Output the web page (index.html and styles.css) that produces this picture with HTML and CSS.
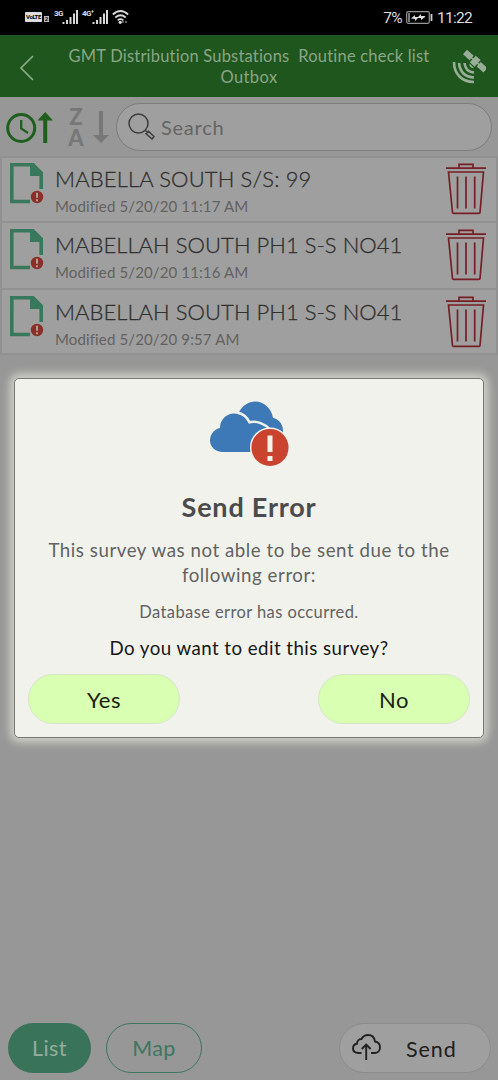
FILE: index.html
```
<!DOCTYPE html>
<html lang="en">
<head>
<meta charset="utf-8">
<title>Outbox</title>
<link rel="stylesheet" href="styles.css">
</head>
<body>
<svg class="defs" width="0" height="0">
  <symbol id="file" viewBox="0 0 36 42">
    <path d="M20 38.5H1.8V1.8H23L31.2 10V26" fill="none" stroke="#38785c" stroke-width="3.6"/>
    <path d="M20 1h4l9 9v3H20z" fill="#38785c"/>
    <circle cx="27" cy="34" r="6.2" fill="#8a3028"/>
    <path d="M27 29.8v5M27 36.3v2" stroke="#b4aaa2" stroke-width="1.8"/>
  </symbol>
  <symbol id="trash" viewBox="0 0 40 52">
    <g fill="none" stroke="#761f25" stroke-width="1.7">
      <path d="M0 5.2H40M13 4.5V1.3H27V4.5M2.5 9H37.5L34 49.5Q33.9 50.4 33 50.4H7.500Q6.600 50.400 6.500 49.500ZM11.500 13.500V45.500M20 13.500V45.500M28.700 13.500V45.500"/>
    </g>
  </symbol>
  <symbol id="signal" viewBox="0 0 16 14">
    <path d="M1.500 14V12M5 14V10M8.500 14V7M12 14V3.500M15 14V0" stroke="#d8d8d8" stroke-width="2"/>
  </symbol>
</svg>
<div class="screen">
  <header class="status">
    <div class="status-left">
      <span class="volte">VoLTE</span><span class="sim">2</span>
      <span class="net">3G</span><svg class="bars" width="16" height="14"><use href="#signal"/></svg>
      <span class="net net-b">4G⁺</span><svg class="bars" width="16" height="14"><use href="#signal"/></svg>
      <svg class="wifi" width="17" height="14" viewBox="0 0 17 14"><g fill="none" stroke="#d8d8d8" stroke-width="1.700"><path d="M.8 4.500Q8.500-2.500 16.200 4.500M3.300 7.500Q8.500 3 13.700 7.500M5.700 10.300Q8.500 8 11.300 10.300"/></g><circle cx="8.200" cy="12.300" r="1.600" fill="#ddd"/><path d="M11 13V11M14 13V11" stroke="#999" stroke-width="1.200"/></svg>
    </div>
    <div class="status-right">
      <span>7%</span>
      <svg width="27" height="13" viewBox="0 0 27 13"><rect x=".7" y=".7" width="22.600" height="11.600" rx="1.500" fill="none" stroke="#999" stroke-width="1.200"/><path d="M3 2v9" stroke="#777" stroke-width="2"/><path d="M5 7.500L9 4V6H12L15 3V5H19V6L15 9V7H12L9 10V8Z" fill="#ddd"/><path d="M25.500 3v7" stroke="#ccc" stroke-width="1.800"/></svg>
      <span>11:22</span>
    </div>
  </header>
  <div class="appbar">
    <svg class="back" width="16" height="26" viewBox="0 0 16 26"><path d="M14 1L2 13L14 25" fill="none" stroke="#8fa98c" stroke-width="1.700"/></svg>
    <h1 class="title"><span class="t1">GMT Distribution Substations&nbsp; Routine check list</span><br><span class="t2">Outbox</span></h1>
    <svg class="sat" width="34" height="34" viewBox="0 0 34 34"><g fill="none" stroke="#99ae96" stroke-width="2.600"><path d="M2 12C2 24 10 32 22 32M7 13C8 22 13 27 22 27.500M12.500 13C13 19 16 22 22 22.500"/></g><g fill="#99ae96"><path d="M17.500 13.500C17 16 19 18.500 22 18Z"/><g transform="translate(23 11) rotate(42)"><rect x="-13.500" y="-3" width="9" height="6"/><rect x="-3" y="-4.500" width="6.500" height="9"/><rect x="5" y="-3" width="9" height="6"/><path d="M-5-.8H6v1.500H-5z"/></g></g></svg>
  </div>
  <div class="toolbar">
    <svg class="sort-time" width="47" height="32" viewBox="0 0 47 32"><g fill="none" stroke="#205e1e"><circle cx="15.200" cy="16" r="13.500" stroke-width="3"/><path d="M15.200 8V16.500L22 21" stroke-width="2.300"/><path d="M39.200 31V4" stroke-width="4"/></g><path d="M31.500 8.500L39.200 0L47 8.500Z" fill="#205e1e"/></svg>
    <div class="sort-name"><span class="za">Z<br>A</span><svg width="16" height="33" viewBox="0 0 16 33"><path d="M8 1V27" stroke="#777" stroke-width="4"/><path d="M0 25H16L8 33Z" fill="#777"/></svg></div>
    <div class="search">
      <svg width="27" height="27" viewBox="0 0 27 27"><g fill="none" stroke="#3d3d3d" stroke-width="1.500"><circle cx="10.500" cy="10.500" r="9.500"/><path d="M17.500 17.500l2 2M18 20.800L20.500 18.300L26 23.500L24 26Z"/></g></svg>
      <span>Search</span>
    </div>
  </div>
  <main class="list">
    <article class="row"><svg class="file" width="36" height="42"><use href="#file"/></svg><div class="copy"><div class="name n1">MABELLA SOUTH S/S: 99</div><div class="date">Modified 5/20/20 11:17 AM</div></div><svg width="40" height="52"><use href="#trash"/></svg></article>
    <article class="row"><svg class="file" width="36" height="42"><use href="#file"/></svg><div class="copy"><div class="name">MABELLAH SOUTH PH1 S-S NO41</div><div class="date">Modified 5/20/20 11:16 AM</div></div><svg width="40" height="52"><use href="#trash"/></svg></article>
    <article class="row"><svg class="file" width="36" height="42"><use href="#file"/></svg><div class="copy"><div class="name">MABELLAH SOUTH PH1 S-S NO41</div><div class="date">Modified 5/20/20 9:57 AM</div></div><svg width="40" height="52"><use href="#trash"/></svg></article>
  </main>
  <footer class="footer">
    <span class="pill list-btn">List</span>
    <span class="pill map-btn">Map</span>
    <span class="pill send-btn"><svg width="29" height="27" viewBox="0 0 29 27"><g fill="none" stroke="#222" stroke-width="1.900"><path d="M9.500 19H6.500C3 19 1 17 1 14.500C1 12 2.800 10 5 9.700C5 6.500 7.500 5 9.500 5C11 2.200 13.500 1 16 1C20 1 22.500 3.500 23 7.500C26 8 28 10.500 28 13.500C28 17 25.500 19 22.500 19H19"/><path d="M14.200 26V11M9.800 15L14.200 10.500L18.600 15"/></g></svg><span>Send</span></span>
  </footer>
  <section class="dialog">
    <svg class="cloud" width="80" height="66" viewBox="0 0 80 66"><path d="M29 11C33 4 39 .5 45 .5C54 .5 62 8 63 17C69 18 73.500 24 73 31L60 35L30 25Z" fill="#3c79b6"/><path d="M13 51C5 51 0 45.500 0 39.500C0 33 4.500 28 10 27C10 19 16 12.500 24 12.500C31 12.500 36.500 16 39 22C47 19.500 55 23 58 29V51Z" fill="#3c79b6"/><path d="M27 11.500C32 12.500 37 16 39.500 21.300C47 19.500 55 23 60 28.500" fill="none" stroke="#f1f2ec" stroke-width="2.500"/><circle cx="60" cy="46.500" r="19.300" fill="#c9432f" stroke="#f1f2ec" stroke-width="1.500"/><path d="M57.500 34.500H62.500V51H57.500ZM57.500 55H62.500V60H57.500Z" fill="#f5f2ea"/></svg>
    <h2>Send Error</h2>
    <p class="message">This survey was not able to be sent due to the<br>following error:</p>
    <p class="detail">Database error has occurred.</p>
    <p class="question">Do you want to edit this survey?</p>
    <div class="actions"><span class="action yes">Yes</span><span class="action">No</span></div>
  </section>
</div>
</body>
</html>
```
FILE: styles.css
```
* { box-sizing: border-box; }
body { margin: 0; font-family: Lato, "Open Sans", sans-serif; }
svg { display: block; flex: none; }
h1, h2, p { margin: 0; font-weight: 400; }
.defs { position: absolute; }
.screen { position: relative; width: 498px; height: 1080px; display: flex; flex-direction: column; background: #979797; overflow: hidden; white-space: nowrap; }
.status { height: 35px; flex: none; background: #000; color: #ddd; display: flex; justify-content: space-between; padding: 0 26px 0 25px; font-family: Roboto, sans-serif; }
.status-left { display: flex; align-items: flex-start; padding-top: 10px; }
.volte { width: 17px; height: 10px; margin-top: 2px; background: #ddd; color: #000; border-radius: 1px; font: 700 6px/10px Roboto, sans-serif; letter-spacing: -.4px; text-align: center; }
.sim { width: 5px; height: 6px; margin: 6px 5px 0 2px; background: #bbb; color: #000; font: 700 6px/6px Roboto, sans-serif; text-align: center; }
.net { width: 8px; font: 700 8px/7px Roboto, sans-serif; letter-spacing: -.7px; }
.net-b { width: 10px; margin-left: 4px; }
.wifi { margin-left: 4px; }
.status-right { display: flex; align-items: center; gap: 4px; font-size: 15.500px; letter-spacing: -.7px; }
.appbar { height: 62px; flex: none; background: #1f561d; color: #8aa587; display: flex; align-items: center; padding: 0 12px 0 19px; }
.back { margin-top: 3px; }
.sat { margin-top: 2px; }
.title { flex: 1; text-align: center; font-size: 16.500px; line-height: 21px; padding: 1px 0 0 11px; }
.t1 { letter-spacing: .2px; }
.t2 { letter-spacing: .4px; }
.toolbar { height: 59px; flex: none; display: flex; align-items: center; padding: 0 6px; }
.sort-time { margin-top: 2px; }
.sort-name { display: flex; align-items: center; width: 42px; margin-left: 14px; gap: 8px; }
.za { width: 18px; text-align: center; color: #777; font: 900 22px/21px Lato, sans-serif; }
.search { width: 376px; height: 48px; margin: 0 0 0 7px; border: 1.500px solid #7d7d7d; border-radius: 24px; background: #9f9f9f; display: flex; align-items: center; padding-left: 11px; gap: 6px; color: #656565; font-size: 20px; letter-spacing: .75px; }
.list { flex: none; }
.row { height: 66.400px; border: 2px solid #919191; border-top-width: 1px; border-bottom-width: 1px; background: #9f9f9f; display: flex; align-items: flex-start; padding: 6px 10px 0 8px; }
.row:first-child { border-top-width: 2px; padding-top: 5px; }
.row:last-child { border-bottom-width: 2px; }
.copy { flex: 1; padding-left: 9px; }
.name { color: #303030; font-size: 22px; font-weight: 300; line-height: 32px; letter-spacing: .05px; -webkit-text-stroke: .3px #303030; }
.n1 { letter-spacing: .15px; }
.date { color: #626262; font-size: 15px; line-height: 22px; letter-spacing: .13px; }
.footer { margin-top: auto; height: 57px; display: flex; align-items: flex-start; padding: 0 7px 0 8px; font-size: 21.500px; letter-spacing: .4px; }
.pill { height: 50px; border-radius: 25px; display: flex; align-items: center; justify-content: center; }
.list-btn { width: 83px; background: #38735a; color: #94ad9e; }
.map-btn { width: 96px; margin-left: 15px; border: 1.500px solid #3e7660; color: #3e7660; }
.send-btn { width: 152px; margin-left: auto; border: 1px solid #8b8b8b; background: #9f9f9f; color: #202020; justify-content: flex-start; padding: 1px 0 0 12px; gap: 25px; letter-spacing: .9px; }
.send-btn svg { margin-top: -3px; }
.dialog { position: absolute; left: 14px; top: 378px; width: 470px; height: 360px; background: #f1f2ec; border: 1.500px solid #777; border-radius: 5px; box-shadow: 0 0 8px 4px #d3d3cb; text-align: center; color: #626262; }
.cloud { margin: 22px 0 0 195px; }
.dialog h2 { color: #4b4b4b; font-size: 27px; font-weight: 700; line-height: 34px; letter-spacing: .8px; margin-top: 23px; }
.message { font-size: 18.700px; line-height: 25px; letter-spacing: .55px; margin-top: 14px; }
.detail { font-size: 16.500px; line-height: 22px; letter-spacing: .4px; margin-top: 13px; }
.question { color: #171717; font-size: 18.700px; line-height: 24px; letter-spacing: .45px; margin-top: 13px; }
.actions { display: flex; justify-content: space-between; padding: 0 13px; margin-top: 14px; }
.action { width: 152px; height: 50px; border: 1.500px solid #d6e5c7; border-radius: 25px; background: #d9ffb2; color: #172312; font-size: 22px; line-height: 49px; letter-spacing: .5px; }
```
